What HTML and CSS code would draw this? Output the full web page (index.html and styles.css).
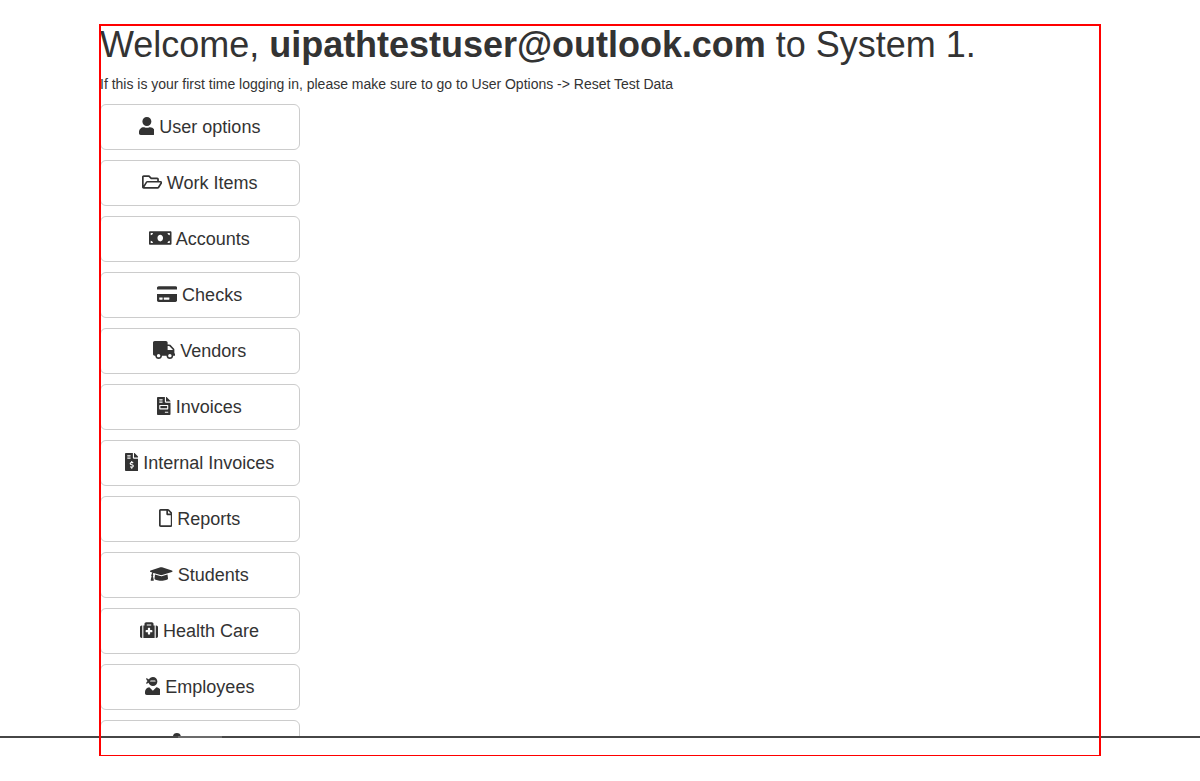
FILE: index.html
```
<!DOCTYPE html>
<html lang="en">
<head>
<meta charset="utf-8">
<title>System 1</title>
<link rel="stylesheet" href="styles.css">
</head>
<body>
<div class="page">
<main class="content">
<h1 class="title">Welcome, <b>uipathtestuser@outlook.com</b> to System 1.</h1>
<p class="hint">If this is your first time logging in, please make sure to go to User Options -&gt; Reset Test Data</p>
<nav class="menu">
<button class="btn"><svg class="icon w14" viewBox="0 0 448 512"><path d="M224 256c70.7 0 128-57.3 128-128S294.7 0 224 0 96 57.3 96 128s57.3 128 128 128zm89.6 32h-16.7c-22.2 10.2-46.9 16-72.9 16s-50.6-5.8-72.9-16h-16.7C60.2 288 0 348.2 0 422.4V464c0 26.5 21.5 48 48 48h352c26.5 0 48-21.5 48-48v-41.6c0-74.2-60.2-134.4-134.4-134.4z"/></svg> User options</button>
<button class="btn"><svg class="icon w18" viewBox="0 0 576 512"><path d="M527.9 224H480v-48c0-26.5-21.5-48-48-48H272l-64-64H48C21.5 64 0 85.5 0 112v288c0 26.5 21.5 48 48 48h400c16.5 0 31.9-8.5 40.7-22.6l79.9-128c20-31.9-3-73.4-40.7-73.4zM48 118c0-3.3 2.7-6 6-6h134.1l64 64H426c3.3 0 6 2.7 6 6v42H152c-16.8 0-32.4 8.8-41.1 23.2L48 351.4zm400 282H72l77.2-128H528z"/></svg> Work Items</button>
<button class="btn"><svg class="icon w20" viewBox="0 0 640 512"><path d="M608 64H32C14.33 64 0 78.33 0 96v320c0 17.67 14.33 32 32 32h576c17.67 0 32-14.33 32-32V96c0-17.67-14.33-32-32-32zM48 400v-64c35.35 0 64 28.65 64 64H48zm0-224v-64h64c0 35.35-28.65 64-64 64zm272 176c-44.19 0-80-42.99-80-96 0-53.02 35.82-96 80-96s80 42.98 80 96c0 53.03-35.83 96-80 96zm272 48h-64c0-35.35 28.65-64 64-64v64zm0-224c-35.35 0-64-28.65-64-64h64v64z"/></svg> Accounts</button>
<button class="btn"><svg class="icon w18" viewBox="0 0 576 512"><path d="M0 432c0 26.5 21.5 48 48 48h480c26.5 0 48-21.5 48-48V256H0v176zm192-68c0-6.6 5.4-12 12-12h136c6.6 0 12 5.4 12 12v40c0 6.6-5.4 12-12 12H204c-6.6 0-12-5.4-12-12v-40zm-128 0c0-6.6 5.4-12 12-12h72c6.6 0 12 5.4 12 12v40c0 6.6-5.4 12-12 12H76c-6.6 0-12-5.4-12-12v-40zM576 80v48H0V80c0-26.5 21.5-48 48-48h480c26.5 0 48 21.5 48 48z"/></svg> Checks</button>
<button class="btn"><svg class="icon w20" viewBox="0 0 640 512"><path d="M624 352h-16V243.9c0-12.7-5.1-24.9-14.1-33.9L494 110.1c-9-9-21.2-14.1-33.9-14.1H416V48c0-26.5-21.5-48-48-48H48C21.5 0 0 21.5 0 48v320c0 26.5 21.5 48 48 48h16c0 53 43 96 96 96s96-43 96-96h128c0 53 43 96 96 96s96-43 96-96h48c8.8 0 16-7.2 16-16v-32c0-8.8-7.2-16-16-16zM160 464c-26.5 0-48-21.5-48-48s21.5-48 48-48 48 21.5 48 48-21.5 48-48 48zm320 0c-26.5 0-48-21.5-48-48s21.5-48 48-48 48 21.5 48 48-21.5 48-48 48zm80-208H416V144h44.1l99.9 99.9V256z"/></svg> Vendors</button>
<button class="btn"><svg class="icon w12" viewBox="0 0 384 512"><path d="M288 256H96v64h192v-64zm89-151L279.1 7c-4.5-4.5-10.6-7-17-7H256v128h128v-6.1c0-6.3-2.5-12.4-7-16.9zm-153 31V0H24C10.7 0 0 10.7 0 24v464c0 13.3 10.7 24 24 24h336c13.3 0 24-10.7 24-24V160H248c-13.2 0-24-10.8-24-24zM64 72c0-4.42 3.58-8 8-8h80c4.42 0 8 3.58 8 8v16c0 4.42-3.58 8-8 8H72c-4.42 0-8-3.58-8-8V72zm0 64c0-4.42 3.58-8 8-8h80c4.42 0 8 3.58 8 8v16c0 4.42-3.58 8-8 8H72c-4.42 0-8-3.58-8-8v-16zm256 304c0 4.42-3.58 8-8 8h-80c-4.42 0-8-3.58-8-8v-16c0-4.42 3.58-8 8-8h80c4.42 0 8 3.58 8 8v16zm0-200v96c0 8.84-7.16 16-16 16H80c-8.84 0-16-7.16-16-16v-96c0-8.84 7.16-16 16-16h224c8.84 0 16 7.16 16 16z"/></svg> Invoices</button>
<button class="btn"><svg class="icon w12" viewBox="0 0 384 512"><path d="M377 105L279.1 7c-4.5-4.5-10.6-7-17-7H256v128h128v-6.1c0-6.3-2.5-12.4-7-16.9zm-153 31V0H24C10.7 0 0 10.7 0 24v464c0 13.3 10.7 24 24 24h336c13.3 0 24-10.7 24-24V160H248c-13.2 0-24-10.8-24-24zM64 72c0-4.42 3.58-8 8-8h80c4.42 0 8 3.58 8 8v16c0 4.42-3.58 8-8 8H72c-4.42 0-8-3.58-8-8V72zm0 80v-16c0-4.42 3.58-8 8-8h80c4.42 0 8 3.58 8 8v16c0 4.42-3.58 8-8 8H72c-4.42 0-8-3.58-8-8zm144 263.88V440c0 4.42-3.58 8-8 8h-16c-4.42 0-8-3.58-8-8v-24.29c-11.29-.58-22.27-4.52-31.37-11.35-3.9-2.93-4.1-8.77-.57-12.14l11.75-11.21c2.77-2.64 6.89-2.76 10.13-.73 3.87 2.42 8.26 3.72 12.82 3.72h28.11c6.5 0 11.8-5.92 11.8-13.19 0-5.95-3.61-11.19-8.77-12.73l-45-13.5c-18.59-5.58-31.58-23.42-31.58-43.39 0-24.52 19.05-44.44 42.67-45.07V232c0-4.42 3.58-8 8-8h16c4.42 0 8 3.58 8 8v24.29c11.29.58 22.27 4.51 31.37 11.35 3.9 2.93 4.1 8.77.57 12.14l-11.75 11.21c-2.77 2.64-6.89 2.76-10.13.73-3.87-2.43-8.26-3.72-12.82-3.72h-28.11c-6.5 0-11.8 5.92-11.8 13.19 0 5.95 3.61 11.19 8.77 12.73l45 13.5c18.59 5.58 31.58 23.42 31.58 43.39 0 24.53-19.05 44.44-42.67 45.07z"/></svg> Internal Invoices</button>
<button class="btn"><svg class="icon w12" viewBox="0 0 384 512"><path d="M369.9 97.9L286 14C277 5 264.8-.1 252.1-.1H48C21.5 0 0 21.5 0 48v416c0 26.5 21.5 48 48 48h288c26.5 0 48-21.5 48-48V131.9c0-12.7-5.1-25-14.1-34zM332.1 128H256V51.9l76.1 76.1zM48 464V48h160v104c0 13.3 10.7 24 24 24h104v288H48z"/></svg> Reports</button>
<button class="btn"><svg class="icon w20" viewBox="0 0 640 512"><path d="M622.34 153.2L343.4 67.5c-15.2-4.67-31.6-4.67-46.79 0L17.66 153.2c-23.54 7.23-23.54 38.36 0 45.59l48.63 14.94c-10.67 13.19-17.23 29.28-17.88 46.9C38.78 266.15 32 276.11 32 288c0 10.78 5.68 19.85 13.86 25.65L20.33 428.53C18.11 438.52 25.71 448 35.94 448h56.11c10.24 0 17.84-9.48 15.62-19.47L82.14 313.65C90.32 307.85 96 298.78 96 288c0-11.57-6.47-21.25-15.66-26.87.76-15.02 8.44-28.3 20.69-36.72L296.6 284.5c9.06 2.78 26.44 6.25 46.79 0l278.95-85.7c23.55-7.24 23.55-38.36 0-45.6zM352.79 315.09c-28.53 8.76-52.84 3.92-65.59 0l-145.02-44.55L128 384c0 35.35 85.96 64 192 64s192-28.65 192-64l-14.18-113.47-145.03 44.56z"/></svg> Students</button>
<button class="btn"><svg class="icon w16" viewBox="0 0 512 512"><path d="M96 480h320V128h-32V80c0-26.51-21.49-48-48-48H176c-26.51 0-48 21.49-48 48v48H96v352zm96-384h128v32H192V96zm320 80v256c0 26.51-21.49 48-48 48h-16V128h16c26.51 0 48 21.49 48 48zM64 480H48c-26.51 0-48-21.49-48-48V176c0-26.51 21.49-48 48-48h16v352zm288-208v32c0 8.837-7.163 16-16 16h-48v48c0 8.837-7.163 16-16 16h-32c-8.837 0-16-7.163-16-16v-48h-48c-8.837 0-16-7.163-16-16v-32c0-8.837 7.163-16 16-16h48v-48c0-8.837 7.163-16 16-16h32c8.837 0 16 7.163 16 16v48h48c8.837 0 16 7.163 16 16z"/></svg> Health Care</button>
<button class="btn"><svg class="icon w14" viewBox="0 0 448 512"><path d="M325.4 289.2L224 390.6 122.6 289.2C54 295.3 0 352.2 0 422.4V464c0 26.5 21.5 48 48 48h352c26.5 0 48-21.5 48-48v-41.6c0-70.2-54-127.1-122.6-133.2zM32 192c27.3 0 51.8-11.5 69.2-29.7 15.1 53.9 64 93.7 122.8 93.7 70.7 0 128-57.3 128-128S294.7 0 224 0c-50.4 0-93.6 29.4-114.5 71.8C92.1 47.8 64 32 32 32c0 33.4 17.1 62.8 43.1 80-26 17.2-43.1 46.6-43.1 80zm144-96h96c17.7 0 32 14.3 32 32H144c0-17.7 14.3-32 32-32z"/></svg> Employees</button>
<button class="btn btn-cut"><svg class="icon w14" viewBox="0 0 448 512"><circle cx="224" cy="112" r="112"/></svg></button>
</nav>
</main>
<div class="divider"></div>
<div class="frame"></div>
</div>
</body>
</html>
```
FILE: styles.css
```
* { box-sizing: border-box; }
body {
  margin: 0;
  background: #fff;
  color: #333;
  font-family: "Liberation Sans", Arial, sans-serif;
  font-size: 14px;
  line-height: 20px;
}
.page { position: relative; height: 781px; overflow: hidden; }
.content { width: 1000px; height: 736px; margin: 0 auto; padding-top: 25px; overflow: hidden; }
.title { margin: 0 0 10px; font-size: 36px; font-weight: 400; line-height: 39px; letter-spacing: -0.02px; white-space: nowrap; }
.hint { margin: 0 0 10px; letter-spacing: -0.006px; white-space: nowrap; }
.menu { display: flex; flex-direction: column; gap: 10px; width: 200px; }
.btn {
  height: 46px;
  flex: none;
  padding: 10px 1px 10px 0;
  border: 1px solid #ccc;
  border-radius: 6px;
  background: #fff;
  color: #333;
  font: 18px/24px "Liberation Sans", Arial, sans-serif;
  text-align: center;
  white-space: nowrap;
}
.btn-cut { padding-right: 46px; }
.icon { height: 18px; fill: currentColor; vertical-align: -2.25px; }
.w12 { width: 13.5px; }
.w14 { width: 15.75px; }
.w16 { width: 18px; }
.w18 { width: 20.25px; }
.w20 { width: 22.5px; }
.divider {
  height: 2px;
  background: linear-gradient(90deg, #464646 178px, #6b6b6b 178px, #6b6b6b 222px, #464646 222px);
}
/* Highlight outline drawn over the content and the divider */
.frame {
  position: absolute;
  left: 99px;
  top: 24px;
  width: 1002px;
  height: 732px;
  border: 2px solid #f00;
  border-bottom-width: 1px;
}
```
